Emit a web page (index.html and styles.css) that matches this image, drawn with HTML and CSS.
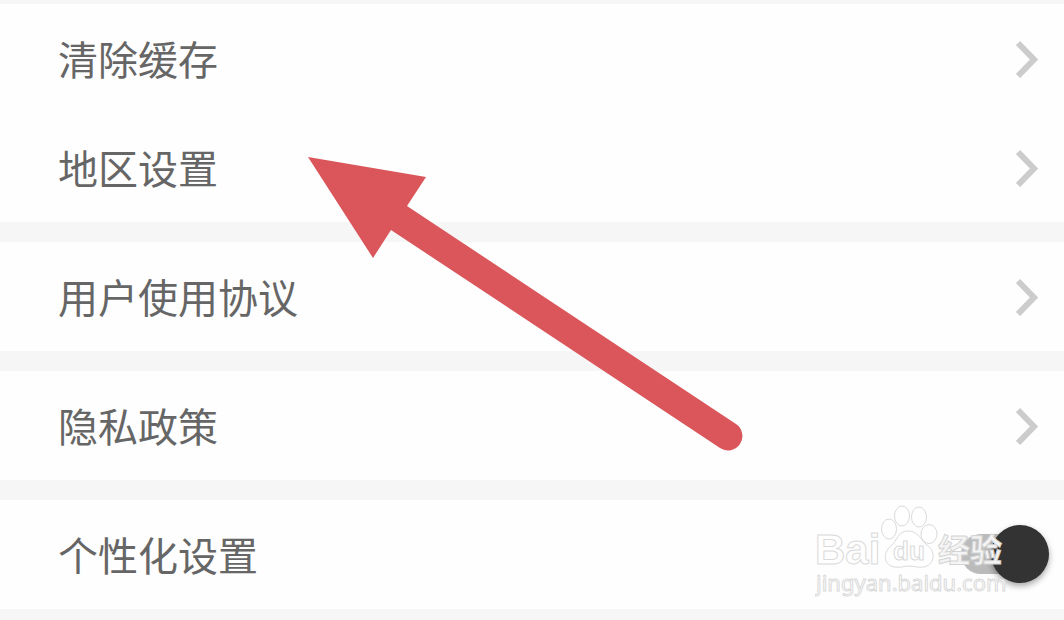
FILE: index.html
```html
<!DOCTYPE html>
<html lang="zh-CN">
<head>
<meta charset="utf-8">
<meta name="viewport" content="width=device-width, initial-scale=1">
<title>设置</title>
<link rel="stylesheet" href="styles.css">
</head>
<body>
<main class="settings">
  <section class="group">
    <button class="row" type="button"><span class="label">清除缓存</span><svg class="chevron" viewBox="0 0 24 40" aria-hidden="true"><path d="M3 5L19 21.500L3 38"/></svg></button>
    <button class="row" type="button"><span class="label">地区设置</span><svg class="chevron" viewBox="0 0 24 40" aria-hidden="true"><path d="M3 5L19 21.500L3 38"/></svg></button>
  </section>
  <section class="group">
    <button class="row" type="button"><span class="label">用户使用协议</span><svg class="chevron" viewBox="0 0 24 40" aria-hidden="true"><path d="M3 5L19 21.500L3 38"/></svg></button>
  </section>
  <section class="group">
    <button class="row" type="button"><span class="label">隐私政策</span><svg class="chevron" viewBox="0 0 24 40" aria-hidden="true"><path d="M3 5L19 21.500L3 38"/></svg></button>
  </section>
  <section class="group">
    <div class="row row-switch"><label class="label" for="personal">个性化设置</label><input class="switch" id="personal" type="checkbox" role="switch" checked></div>
  </section>
  <svg class="arrow" viewBox="0 0 436 294" aria-hidden="true">
    <path d="M0 0L118 20L99 49L428 267A14 14 0 0 1 412 291L83 73L65 101Z"/>
  </svg>
  <svg class="watermark" viewBox="0 0 200 100" role="img" aria-label="Baidu经验 jingyan.baidu.com">
    <g class="mark">
      <text class="brand" x="0" y="64">Bai</text>
      <ellipse cx="74" cy="29" rx="7.5" ry="10"/>
      <ellipse cx="87" cy="16" rx="7.5" ry="10"/>
      <ellipse cx="104" cy="17" rx="7.5" ry="10"/>
      <ellipse cx="114" cy="34" rx="8" ry="9.5"/>
      <path d="M93 31C104 31 106 41 112 45C122 52 119 66 108 67C103 68 98 66 94 66C90 66 85 68 80 67C69 66 67 53 76 46C82 41 83 31 93 31Z"/>
      <text class="du" x="78" y="60">du</text>
      <text class="site" x="1" y="91">jingyan.baidu.com</text>
    </g>
    <text class="name" x="123" y="62">经验</text>
  </svg>
</main>
</body>
</html>
```
FILE: styles.css
```css
* {
  box-sizing: border-box;
}

body {
  margin: 0;
  background: #f6f6f6;
  color: #666;
  font-family: "Noto Sans CJK SC", sans-serif;
}

.settings {
  position: relative;
  display: flex;
  flex-direction: column;
  gap: 20px;
  padding: 4px 0 11px;
}

.group {
  background: #fefefe;
}

.row {
  display: flex;
  align-items: center;
  justify-content: space-between;
  width: 100%;
  padding: 24px 25px 25px 58px;
  border: 0;
  background: none;
  color: inherit;
  font: inherit;
  text-align: left;
}

.label {
  font-size: 40px;
  line-height: 60px;
}

.chevron {
  width: 24px;
  height: 40px;
  fill: none;
  stroke: #ccc;
  stroke-width: 6px;
}

.row-switch {
  padding-right: 15px;
}

.switch {
  appearance: none;
  display: flex;
  align-items: center;
  justify-content: flex-end;
  width: 88px;
  height: 40px;
  margin: 0;
  border-radius: 20px;
  background: #bbb;
}

.switch::before {
  content: "";
  flex: none;
  width: 58px;
  height: 58px;
  border-radius: 50%;
  background: #333;
  box-shadow: 0 3px 6px rgba(0, 0, 0, 0.35);
}

.arrow {
  position: absolute;
  top: 157px;
  left: 308px;
  width: 436px;
  height: 294px;
  fill: #db565b;
  pointer-events: none;
}

.watermark {
  position: absolute;
  right: 49px;
  bottom: 20px;
  width: 200px;
  height: 100px;
  pointer-events: none;
}

.mark {
  fill: #fff;
  stroke: #dadada;
  stroke-width: 1px;
}

.brand {
  font: bold 42px "Liberation Sans", sans-serif;
}

.du {
  font: bold 26px "Liberation Sans", sans-serif;
}

.site {
  font: 22px "Noto Sans", sans-serif;
}

.name {
  font: bold 32px "Noto Sans CJK SC", sans-serif;
  fill: #f4f4f4;
  stroke: #d4d4d4;
  stroke-width: 1px;
}
```
